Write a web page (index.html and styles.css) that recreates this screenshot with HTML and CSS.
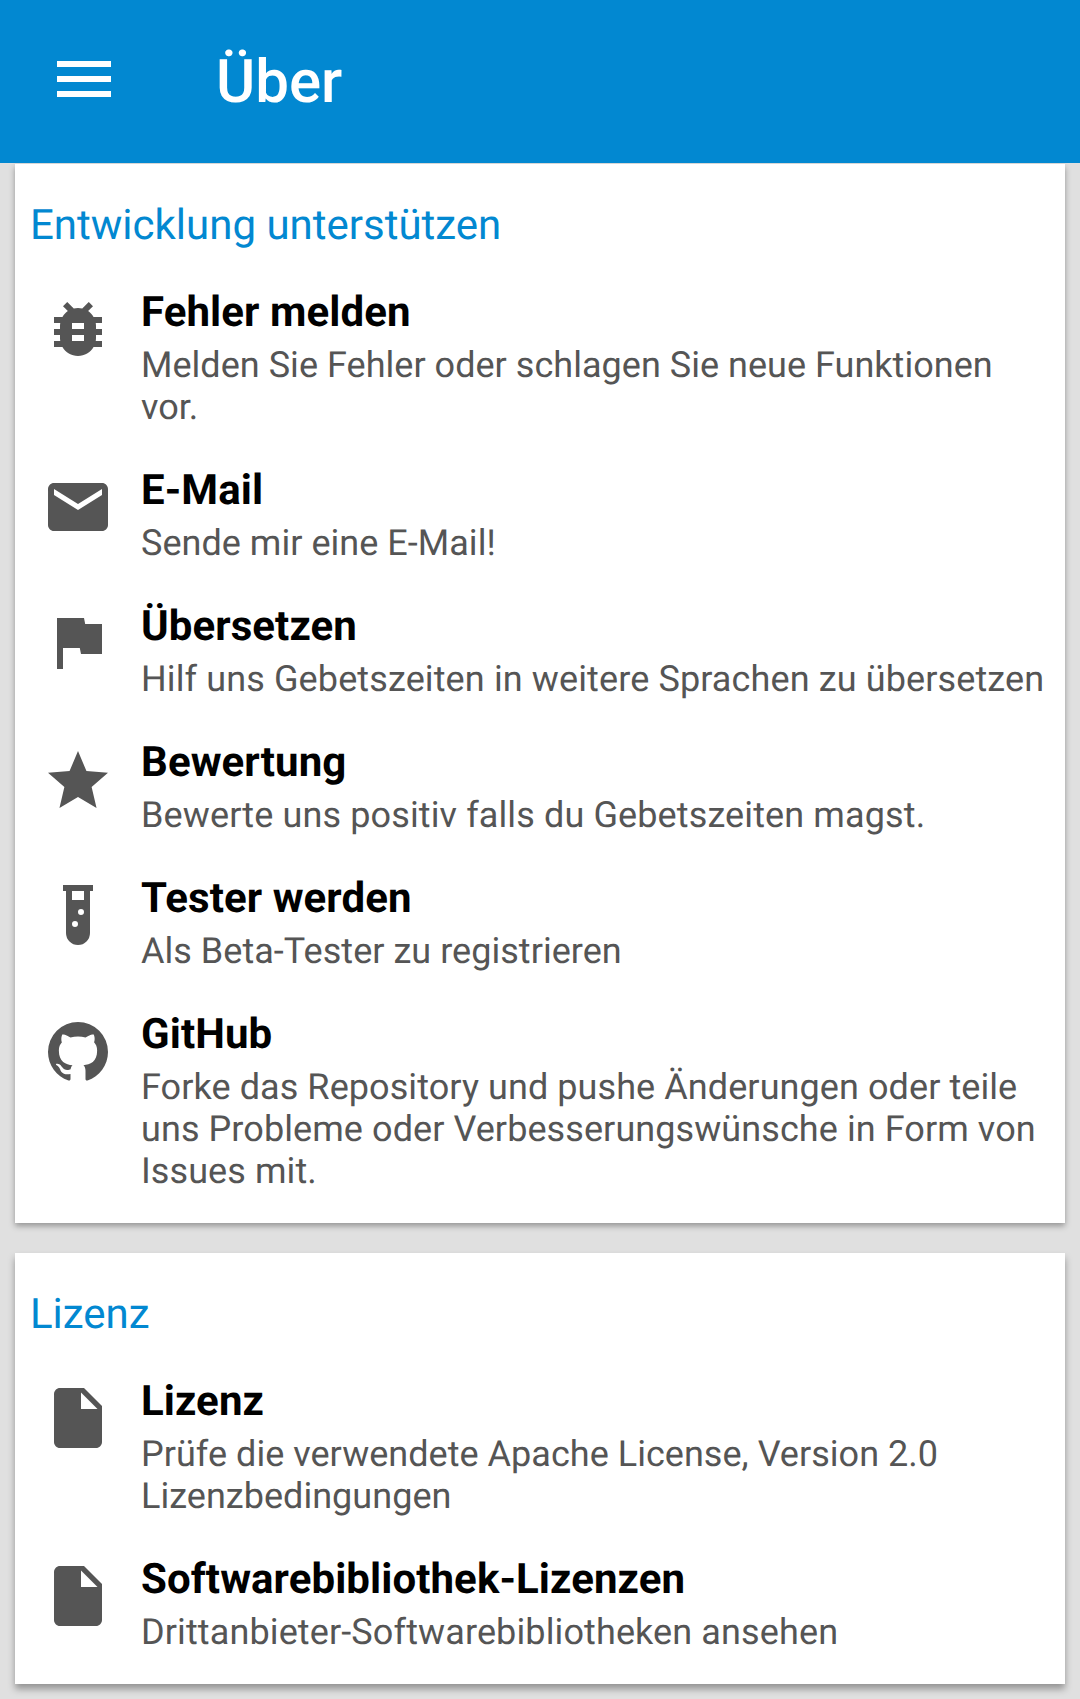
FILE: index.html
```html
<!DOCTYPE html>
<html lang="de">
<head>
<meta charset="utf-8">
<title>Über</title>
<link rel="stylesheet" href="styles.css">
</head>
<body>
<header class="toolbar">
  <svg class="menu" viewBox="0 0 24 24"><path d="M3 18h18v-2H3v2zm0-5h18v-2H3v2zm0-7v2h18V6H3z"/></svg>
  <h1 class="title">Über</h1>
</header>
<main class="content">
  <section class="card">
    <h2 class="heading">Entwicklung unterstützen</h2>
    <div class="item">
      <svg class="icon" viewBox="0 0 24 24"><path d="M20 8h-2.81c-.45-.78-1.07-1.45-1.82-1.96L17 4.41 15.59 3l-2.17 2.17C12.96 5.06 12.49 5 12 5s-.96.06-1.41.17L8.41 3 7 4.41l1.62 1.63C7.88 6.55 7.26 7.22 6.81 8H4v2h2.09c-.05.33-.09.66-.09 1v1H4v2h2v1c0 .34.04.67.09 1H4v2h2.81c1.04 1.79 2.97 3 5.19 3s4.15-1.21 5.19-3H20v-2h-2.09c.05-.33.09-.66.09-1v-1h2v-2h-2v-1c0-.34-.04-.67-.09-1H20V8zm-6 8h-4v-2h4v2zm0-4h-4v-2h4v2z"/></svg>
      <div class="text"><h3 class="name">Fehler melden</h3><p class="desc">Melden Sie Fehler oder schlagen Sie neue Funktionen vor.</p></div>
    </div>
    <div class="item">
      <svg class="icon" viewBox="0 0 24 24"><path d="M20 4H4c-1.1 0-1.99.9-1.99 2L2 18c0 1.1.9 2 2 2h16c1.1 0 2-.9 2-2V6c0-1.1-.9-2-2-2zm0 4l-8 5-8-5V6l8 5 8-5v2z"/></svg>
      <div class="text"><h3 class="name">E-Mail</h3><p class="desc">Sende mir eine E-Mail!</p></div>
    </div>
    <div class="item">
      <svg class="icon" viewBox="0 .333 24 24"><path d="M14.4 6L14 4H5v17h2v-7h5.6l.4 2h7V6z"/></svg>
      <div class="text"><h3 class="name">Übersetzen</h3><p class="desc wide">Hilf uns Gebetszeiten in weitere Sprachen zu übersetzen</p></div>
    </div>
    <div class="item">
      <svg class="icon" viewBox="0 -.7 24 24"><path d="M12 17.27L18.18 21l-1.64-7.03L22 9.24l-7.19-.61L12 2 9.19 8.63 2 9.24l5.46 4.73L5.82 21z"/></svg>
      <div class="text"><h3 class="name">Bewertung</h3><p class="desc wide">Bewerte uns positiv falls du Gebetszeiten magst.</p></div>
    </div>
    <div class="item">
      <svg class="icon" viewBox="0 0 24 24"><path d="M7 2v2h1v14a4 4 0 0 0 8 0V4h1V2H7zm4 14a1 1 0 1 1 0-2 1 1 0 0 1 0 2zm2-4a1 1 0 1 1 0-2 1 1 0 0 1 0 2zm1-5h-4V4h4v3z"/></svg>
      <div class="text"><h3 class="name">Tester werden</h3><p class="desc">Als Beta-Tester zu registrieren</p></div>
    </div>
    <div class="item">
      <svg class="icon" viewBox="0 -.333 24 24"><path d="M12 2A10 10 0 0 0 2 12c0 4.42 2.87 8.17 6.84 9.5.5.08.66-.23.66-.5v-1.69c-2.77.6-3.36-1.34-3.36-1.34-.46-1.16-1.11-1.47-1.11-1.47-.91-.62.07-.6.07-.6 1 .07 1.53 1.03 1.53 1.03.87 1.52 2.34 1.07 2.91.83.09-.65.35-1.09.63-1.34-2.22-.25-4.55-1.11-4.55-4.92 0-1.11.38-2 1.03-2.71-.1-.25-.45-1.29.1-2.64 0 0 .84-.27 2.75 1.02.79-.22 1.65-.33 2.5-.33s1.71.11 2.5.33c1.91-1.29 2.75-1.02 2.75-1.02.55 1.35.2 2.39.1 2.64.65.71 1.03 1.6 1.03 2.71 0 3.82-2.34 4.66-4.57 4.91.36.31.69.92.69 1.85V21c0 .27.16.59.67.5C19.14 20.16 22 16.42 22 12A10 10 0 0 0 12 2z"/></svg>
      <div class="text"><h3 class="name">GitHub</h3><p class="desc medium">Forke das Repository und pushe Änderungen oder teile uns Probleme oder Verbesserungswünsche in Form von Issues mit.</p></div>
    </div>
  </section>
  <section class="card card-last">
    <h2 class="heading">Lizenz</h2>
    <div class="item">
      <svg class="icon" viewBox="0 0 24 24"><path d="M6 2c-1.1 0-1.99.9-1.99 2L4 20c0 1.1.89 2 1.99 2H18c1.1 0 2-.9 2-2V8l-6-6H6zm7 7V3.5L18.5 9H13z"/></svg>
      <div class="text"><h3 class="name">Lizenz</h3><p class="desc">Prüfe die verwendete Apache License, Version 2.0 Lizenzbedingungen</p></div>
    </div>
    <div class="item">
      <svg class="icon" viewBox="0 0 24 24"><path d="M6 2c-1.1 0-1.99.9-1.99 2L4 20c0 1.1.89 2 1.99 2H18c1.1 0 2-.9 2-2V8l-6-6H6zm7 7V3.5L18.5 9H13z"/></svg>
      <div class="text"><h3 class="name">Softwarebibliothek-Lizenzen</h3><p class="desc wide">Drittanbieter-Softwarebibliotheken ansehen</p></div>
    </div>
  </section>
</main>
</body>
</html>
```
FILE: styles.css
```css
* { box-sizing: border-box; }
body { margin: 0; height: 1699px; overflow: hidden; background: #e0e0e0; font-family: Roboto, sans-serif; text-rendering: geometricPrecision; }
h1, h2, h3, p { margin: 0; }
.toolbar { height: 163px; background: #0288d1; display: flex; align-items: flex-start; padding-left: 48px; }
.menu { width: 72px; height: 72px; margin-top: 43px; fill: #fff; }
.title { margin-left: 96px; margin-top: 47px; font-size: 60px; line-height: 70px; font-weight: 500; color: #fff; }
.content { padding: 1px 15px 0; overflow: hidden; height: 1536px; }
.card { background: #fff; padding: 37px 15px 31px; margin-bottom: 30px; box-shadow: 0 3px 6px rgba(0,0,0,.34); }
.card-last { box-shadow: 0 5px 7px rgba(0,0,0,.34); }
.heading { font-size: 42px; line-height: 50px; font-weight: 400; color: #0288d1; margin-bottom: 36px; }
.item { display: flex; align-items: flex-start; margin-bottom: 37px; }
.item:last-child { margin-bottom: 0; }
.icon { width: 72px; height: 72px; margin: 6px 27px 0 12px; fill: #555; flex: none; }
.text { flex: 1; }
.name { padding-top: 1px; font-size: 42px; line-height: 50px; font-weight: 700; letter-spacing: .08px; color: #000; }
.desc { font-size: 36px; line-height: 42px; margin-top: 6px; letter-spacing: .03px; color: #555; }
.medium { letter-spacing: .08px; }
.wide { letter-spacing: .12px; }
```
